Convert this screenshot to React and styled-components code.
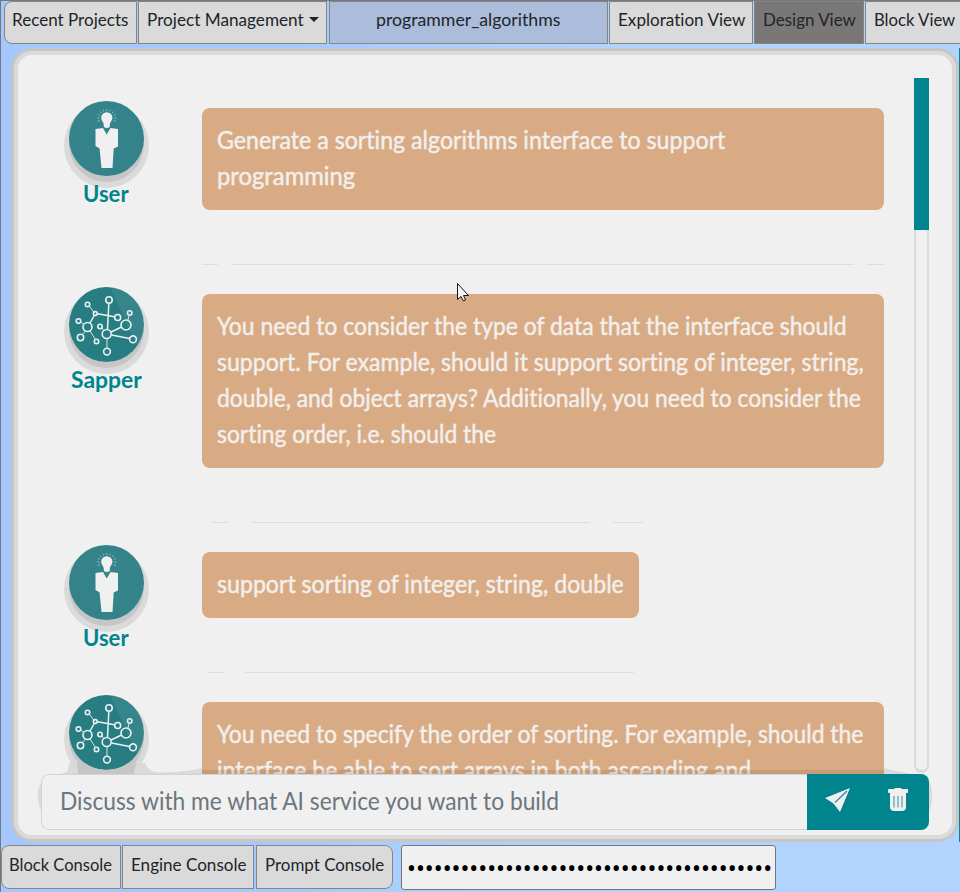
import React, { useLayoutEffect, useRef, useState } from "react";
import styled, { createGlobalStyle } from "styled-components";

const Global = createGlobalStyle`
  * { box-sizing: border-box; }
  body { margin: 0; overflow: hidden; font-family: Lato, "Noto Sans", sans-serif; font-variant-ligatures: none; }
`;

const Page = styled.div`
  position: relative;
  width: 960px;
  height: 892px;
  overflow: hidden;
  display: flex;
  flex-direction: column;
  border-top: 1px solid #77777d;
  border-left: 1px solid #77777d;
  background: linear-gradient(90deg, #a4c8fd 0%, #a4c8fd 25%, #b0d4fd 60%, #b0d4fd 100%);
`;
const TopBar = styled.nav`
  display: flex;
  gap: 1px;
  height: 43px;
  flex: none;
  padding-left: 3px;
`;
const BarButton = styled.button`
  flex: none;
  display: flex;
  align-items: center;
  width: ${(p) => p.$w}px;
  height: 43px;
  margin: 0 ${(p) => p.$gap || 0}px 0 0;
  padding: 0 0 5px ${(p) => p.$pad ?? 7}px;
  border: 1px solid #858585;
  border-radius: ${(p) => p.$radius || "0"};
  background: ${(p) => p.$bg || "#dadada"};
  color: #212529;
  font: 17.5px/24px Lato, "Noto Sans", sans-serif;
  font-variant-ligatures: none;
  text-align: left;
`;
const Caret = styled.span`
  margin: -2px 0 0 5px;
  border: 5px solid transparent;
  border-top-color: #212529;
  border-bottom: 0;
`;
const FitBox = styled.span`
  display: block;
  flex: none;
  width: ${(p) => p.$w}px;
  white-space: pre;
`;
const FitInner = styled.span`
  display: inline-block;
  transform-origin: 0 50%;
`;

/* Condenses a line of text to the given width. */
function Fit({ w, children }) {
  const ref = useRef(null);
  const [scale, setScale] = useState(1);
  useLayoutEffect(() => {
    setScale(w / ref.current.offsetWidth);
  }, [w, children]);
  return (
    <FitBox $w={w}>
      <FitInner ref={ref} style={{ transform: `scaleX(${scale})` }}>{children}</FitInner>
    </FitBox>
  );
}

const Panel = styled.main`
  position: relative;
  flex: none;
  width: 948px;
  height: 794px;
  margin: 4px 0 0 10px;
  padding: 23px 23px 5px;
  border: 3px solid #c6c6c6;
  border-radius: 21px;
  background: #f0f0f0;
  box-shadow: inset 0 0 0 4px #dadada;
`;
const Edge = styled.div`
  position: absolute;
  right: 0;
  top: 47px;
  width: 1px;
  height: 794px;
  background: #008790;
`;
const Scroller = styled.section`
  display: flex;
  height: 696px;
  overflow: hidden;
  margin: 4px 0 0 4px;
`;
const Messages = styled.div`
  width: 873px;
  flex: none;
  padding: 30px 0 0 24px;
`;
const Track = styled.div`
  width: 15px;
  height: 695px;
  border: 2px solid #dadada;
  border-top: 0;
  border-bottom-width: 3px;
  border-radius: 0 0 8px 8px;
  background: #f0f0f0;
`;
const Thumb = styled.div`
  width: 15px;
  height: 152px;
  margin-left: -2px;
  background: #00848d;
`;
const Row = styled.article`
  display: flex;
  align-items: flex-start;
`;
const Speaker = styled.div`
  width: 83px;
  height: 66px;
  margin: -7px 54px 0 0;
  flex: none;
  display: flex;
  flex-direction: column;
  align-items: center;
  color: #00848d;
  font-weight: 700;
  font-size: 23.5px;
  line-height: 35px;
`;
const Avatar = styled.div`
  width: 75px;
  height: 75px;
  flex: none;
  border-radius: 50%;
  background: ${(p) => p.$bg};
  box-shadow: 0 6px 0 0 #c6c6c6, 0 7px 0 5px #dadada;
  svg { display: block; }
`;
const Name = styled.div`
  position: relative;
  margin-left: -1px;
  white-space: nowrap;
`;
const Bubble = styled.div`
  width: ${(p) => p.$w}px;
  padding: 14px 15px 16px;
  border-radius: 8px;
  background: #d9ab84;
  color: #f2efed;
  font-size: 24.5px;
  line-height: 36px;
  -webkit-text-stroke: 0.45px #f2efed;
`;
const Divider = styled.div`
  display: flex;
  height: 1px;
  margin: 54px 0 29px 137px;
`;
const Dash = styled.span`
  width: ${(p) => p.$w}px;
  margin-left: ${(p) => p.$ml}px;
  background: #dddddd;
`;
const Halo = styled.svg`
  position: absolute;
  left: 23px;
  top: 712px;
`;
const Composer = styled.form`
  position: relative;
  display: flex;
  width: 888px;
  height: 56px;
  margin: 0 0 0 4px;
  border-radius: 8px;
  overflow: hidden;
`;
const Field = styled.div`
  width: 766px;
  display: flex;
  align-items: center;
  padding: 0 0 2px 18px;
  border: 1px solid #ced4da;
  border-right: 0;
  border-radius: 8px 0 0 8px;
  background: #f0f0f0;
  color: #6c757d;
  font-size: 24.5px;
  line-height: 36px;
`;
const Actions = styled.div`
  width: 122px;
  background: #00848d;
  svg { display: block; }
`;
const BottomBar = styled.footer`
  display: flex;
  height: 47px;
  gap: 1px;
  padding-top: 3px;
`;
const ConsoleButton = styled(BarButton)`
  height: 44px;
  padding-bottom: 4px;
`;
const Secret = styled.input`
  width: 375px;
  height: 45px;
  margin-left: 7px;
  padding: 0 0 0 5px;
  border: 1px solid #767676;
  border-radius: 3px;
  background: #f0f0f0;
  color: #000;
  font: 23.7px "Noto Sans", sans-serif;
  outline: 0;
`;
const Cursor = styled.svg`
  position: absolute;
  left: 456px;
  top: 282px;
`;

const UserArt = () => (
  <svg width="75" height="75" viewBox="0 0 75 75">
    <g fill="#f0f0f0">
      <path d="M32.200 16.500a5.600 5.300 0 0 1 11.200 0c0 3.500-2.600 4.500-2.600 7.500v2l-3 1.300-3-1.300v-2c0-3-2.600-4-2.600-7.500z" />
      <path d="M26.500 28l7.500-1 3.700 6.500 3.800-6.500 7.500 1v17.500l-4.300 2-1.200 19.500H32.500l-1.900-19.500-4.100-2.500z" />
    </g>
    <path d="M28.500 20.500l2.500-1M28 17h2.500M28.700 13.500l2 .8M31 10.500l1.300 1.500M34.300 8.800l.5 1.600M37.800 8v1.900M41.300 8.800l-.5 1.600M44.500 10.500L43.200 12M46.700 13.500l-2 .8M47.500 17H45M47 20.500l-2.500-1" stroke="#8fb9bc" strokeWidth="1" />
  </svg>
);
const nodes = [
  [40, 13, 3.2], [18.500, 17.500, 2.200], [26.300, 26.500, 1.900], [9.500, 34, 2.300],
  [18.500, 40, 4.500], [11.500, 50.500, 3.200], [27.500, 54.500, 2.200], [48.700, 30.500, 3],
  [60.700, 26, 2.200], [57, 38, 5], [31, 39.500, 2.200], [37.700, 47, 4.500], [64, 52.300, 3.400], [38, 64.600, 3.400],
];
const SapperArt = () => (
  <svg width="75" height="75" viewBox="0 0 75 75" fill="none" stroke="#e9f2f2">
    <path d="M20.300 19l4.500 6M11.500 35l3 2M16.500 44l-3 3.500M21 44l5.500 8.500M33 41l1.500 2M60 28.500L59 33M38 52v9" strokeWidth="0.9" />
    <path d="M25.300 28.500l-4.300 7.500M28.500 26.700l17 3M39.800 16.500L38.500 42M42 45l10.500-5M42.500 48l18 3.500" strokeWidth="1.500" />
    {nodes.map(([x, y, r]) => <circle key={`${x}-${y}`} cx={x} cy={y} r={r} strokeWidth="1.600" />)}
  </svg>
);

const sapperBg = "linear-gradient(65deg, #287d82 0 69%, #35858a 69% 100%)";
const thread = [
  { who: "User", w: 682, lines: [["Generate a sorting algorithms interface to support", 508], ["programming", 138]],
    dashes: [[0, 16], [15, 621], [13, 17]] },
  { who: "Sapper", w: 682, lines: [["You need to consider the type of data that the interface should", 630], ["support. For example, should it support sorting of integer, string,", 647], ["double, and object arrays? Additionally, you need to consider the", 644], ["sorting order, i.e. should the", 279]],
    dashes: [[9, 17], [24, 338], [23, 30]] },
  { who: "User", w: 437, lines: [["support sorting of integer, string, double", 407]],
    dashes: [[6, 16], [21, 389]] },
  { who: "Sapper", w: 682, last: true, lines: [["You need to specify the order of sorting. For example, should the", 646], ["interface be able to sort arrays in both ascending and", 534]], dashes: [] },
];

function Message({ who, w, lines, dashes, last }) {
  const user = who === "User";
  return (
    <>
      <Row>
        <Speaker>
          <Avatar $bg={user ? "#35838a" : sapperBg}>{user ? <UserArt /> : <SapperArt />}</Avatar>
          {!last && <Name><Fit w={user ? 46 : 71}>{who}</Fit></Name>}
        </Speaker>
        <Bubble $w={w}>
          {lines.map(([text, width]) => <Fit key={text} w={width}>{text}</Fit>)}
        </Bubble>
      </Row>
      <Divider>{dashes.map(([ml, dw]) => <Dash key={ml} $ml={ml} $w={dw} />)}</Divider>
    </>
  );
}

export default function App() {
  return (
    <Page>
      <Global />
      <TopBar>
        <BarButton $w={133} $radius="8px 0 0 8px"><Fit w={116}>Recent Projects</Fit></BarButton>
        <BarButton $w={189} $pad={8} $gap={1}><Fit w={157}>Project Management</Fit><Caret /></BarButton>
        <BarButton $w={279} $bg="#acbddc" $pad={46}><Fit w={184}>programmer_algorithms</Fit></BarButton>
        <BarButton $w={144} $pad={8}><Fit w={127}>Exploration View</Fit></BarButton>
        <BarButton $w={110} $bg="#797876" $pad={8}><Fit w={93}>Design View</Fit></BarButton>
        <BarButton $w={110} $pad={8}><Fit w={81}>Block View</Fit></BarButton>
      </TopBar>
      <Panel>
        <Scroller>
          <Messages>{thread.map((m, i) => <Message key={i} {...m} />)}</Messages>
          <Track><Thumb /></Track>
        </Scroller>
        <Halo width="896" height="62" viewBox="0 0 896 62">
          <path d="M4 20Q0 27 1 36t4 13zM892 18q4 8 3 18t-4 13z" fill="#dadada" />
          <path d="M22 11q7-1 9-4l1-7h8l1 11zM97 11l2-11h9q2 7 10 9 30 1 47-4v6zM847 5q10 3 25 5v1h-25z" fill="#dadada" />
          <path d="M41 11L40 0h7.700A37.500 37.500 0 0 0 91.300 0H99l-2 11z" fill="#c6c6c6" />
          <path d="M165 7h682v4H165z" fill="#785032" fillOpacity="0.17" />
        </Halo>
        <Composer>
          <Field><Fit w={499}>Discuss with me what AI service you want to build</Fit></Field>
          <Actions>
            <svg width="122" height="56" viewBox="0 0 122 56">
              <path d="M43 14L18 24l8.500 5.500L33 38z" fill="#f0f0f0" />
              <path d="M40 17L28 28.500" stroke="#36939a" strokeWidth="1.500" />
              <path d="M81.500 15.500h5.500l1-1h6l1 1h5.500v3h-2v15q0 3-3 3h-9q-3 0-3-3v-15h-2z" fill="#f0f0f0" stroke="#f0f0f0" strokeLinejoin="round" />
              <path d="M87 22v11.500M91 22v11.500M95 22v11.500" stroke="#6fb3b8" strokeWidth="1.500" />
            </svg>
          </Actions>
        </Composer>
      </Panel>
      <BottomBar>
        <ConsoleButton $w={120} $radius="8px 0 0 8px"><Fit w={103}>Block Console</Fit></ConsoleButton>
        <ConsoleButton $w={132} $pad={8} $gap={1}><Fit w={115}>Engine Console</Fit></ConsoleButton>
        <ConsoleButton $w={137} $pad={8} $radius="0 8px 8px 0"><Fit w={119}>Prompt Console</Fit></ConsoleButton>
        <Secret type="password" readOnly value={"a".repeat(41)} />
      </BottomBar>
      <Edge />
      <Cursor width="14" height="20" viewBox="0 0 14 20">
        <path d="M.5.500v16l3.500-3 2.500 4.500 2-1-2-4.500h5z" fill="#f4f4f4" stroke="#171420" />
      </Cursor>
    </Page>
  );
}
